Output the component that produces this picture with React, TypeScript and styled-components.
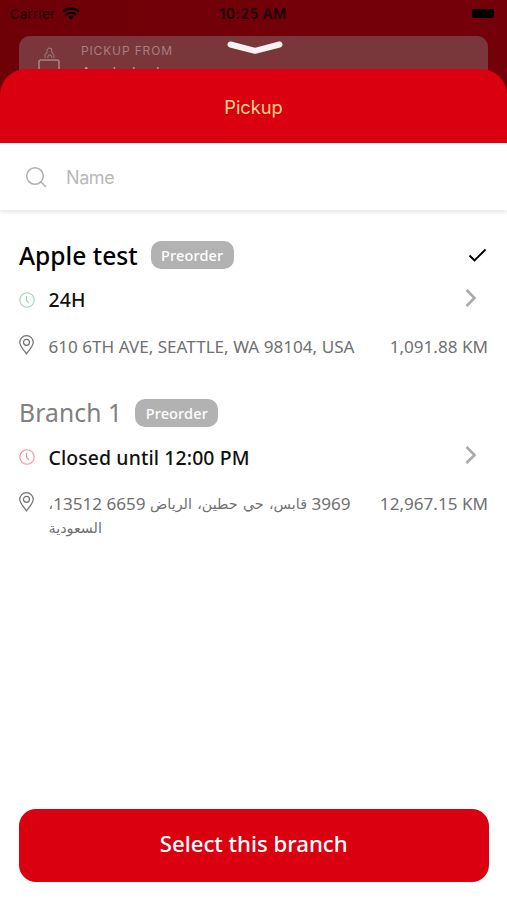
import React from "react";
import styled, { createGlobalStyle } from "styled-components";

const GlobalStyle = createGlobalStyle`
  * { box-sizing: border-box; }
  body { margin: 0; background: #fff; }
`;

const ui = `Inter, "Liberation Sans", sans-serif`;
const brand = `"Noto Sans", "DejaVu Sans", sans-serif`;

const Screen = styled.div`
  width: 507px;
  height: 900px;
  display: flex;
  flex-direction: column;
  background: #fff;
  overflow: hidden;
`;

const Behind = styled.div`
  height: 95px;
  flex: none;
  background: linear-gradient(100deg, #6e0008, #740009 60%);
  padding: 0 19px;
`;

const StatusBar = styled.div`
  height: 35.5px;
  margin: 0 -9px;
  padding: 0 1px 8px 0;
  display: grid;
  grid-template-columns: 1fr auto 1fr;
  align-items: center;
  font-family: ${ui};
  font-size: 13px;
  color: #180002;
`;

const Carrier = styled.div`
  display: flex;
  align-items: center;
  gap: 7px;
  letter-spacing: 0.4px;
`;

const Time = styled.div`
  font-size: 14px;
  font-weight: 600;
  letter-spacing: 0.4px;
`;

const Battery = styled.div`
  justify-self: end;
  width: 22px;
  height: 9px;
  margin-right: 2px;
  border-radius: 2px;
  background: #000;
`;

const PickupCard = styled.div`
  position: relative;
  height: 59px;
  border-radius: 11px;
  background: #79363b;
  padding: 7px 18px 0;
  display: flex;
  gap: 20px;
  font-family: ${ui};
`;

const CardLabel = styled.div`
  font-size: 12px;
  line-height: 16px;
  letter-spacing: 0.85px;
  color: #a87d80;
`;

const CardValue = styled.div`
  font-size: 15px;
  line-height: 20px;
  letter-spacing: 0.9px;
  margin-top: 4px;
  color: #b99a9c;
`;

const Handle = styled.svg`
  position: absolute;
  left: 207px;
  top: 4px;
`;

const Sheet = styled.main`
  position: relative;
  flex: 1;
  margin-top: -26.5px;
  display: flex;
  flex-direction: column;
`;

const Title = styled.header`
  height: 74.5px;
  padding-top: 2px;
  display: flex;
  align-items: center;
  justify-content: center;
  border-radius: 26px 26px 0 0;
  background: #da0010;
  color: #fbd38a;
  font-family: ${ui};
  font-size: 18.3px;
`;

const Search = styled.div`
  height: 67px;
  display: flex;
  align-items: center;
  gap: 18px;
  padding: 1px 25px 0;
  font-family: ${ui};
  font-size: 18px;
  letter-spacing: -0.4px;
  color: #b9b9b9;
  box-shadow: 0 2px 5px rgba(0, 0, 0, 0.11);
`;

const List = styled.div`
  flex: 1;
  padding: 28px 19px 0;
  font-family: ${brand};
`;

const Branch = styled.section`
  height: 157.5px;
`;

const NameRow = styled.div`
  height: 35px;
  display: flex;
  align-items: center;
`;

const Name = styled.h2<{ $active: boolean }>`
  margin: 0;
  font-size: 24.6px;
  line-height: 34px;
  font-weight: ${(p) => (p.$active ? 500 : 400)};
  letter-spacing: ${(p) => (p.$active ? "0" : "0.15px")};
  color: ${(p) => (p.$active ? "#000" : "#808080")};
`;

const Badge = styled.span`
  margin-left: 13px;
  width: 83px;
  height: 28px;
  margin-bottom: 1px;
  display: flex;
  align-items: center;
  justify-content: center;
  border-radius: 10px;
  background: #b2b2b2;
  color: #fff;
  font-size: 14.5px;
  letter-spacing: 0.15px;
  font-weight: 500;
`;

const Check = styled.svg`
  margin-left: auto;
`;

const HoursRow = styled.div`
  height: 30px;
  margin-top: 11.5px;
  display: flex;
  align-items: center;
  font-size: 19.4px;
  font-weight: 500;
  letter-spacing: 0.12px;
  color: #111;
`;

const IconCell = styled.span`
  width: 29.5px;
  flex: none;
  display: flex;
`;

const Chevron = styled.svg`
  margin: -4px 11px 0 auto;
`;

const AddressRow = styled.div`
  margin-top: 20px;
  display: flex;
  align-items: flex-start;
  font-size: 17.1px;
  line-height: 24px;
  color: #707070;
`;

const Address = styled.div<{ $rtl?: boolean }>`
  direction: ${(p) => (p.$rtl ? "rtl" : "ltr")};
  text-align: left;
  white-space: nowrap;
`;

const AddressLine = styled.div`
  height: 24px;
`;

const Arabic = styled.span`
  position: relative;
  top: -1px;
  font-size: 14.3px;
  word-spacing: 1.6px;
`;

const Distance = styled.div`
  margin-left: auto;
  white-space: nowrap;
`;

const Footer = styled.footer`
  padding: 0 18.5px 18.5px 19px;
`;

const SelectButton = styled.button`
  display: block;
  width: 100%;
  height: 73px;
  border: 0;
  padding: 0 0 3px;
  border-radius: 17px;
  background: #da0010;
  color: #fff;
  font-family: ${brand};
  font-size: 22.2px;
  font-weight: 500;
`;

const WifiIcon = () => (
  <svg width="18" height="13" viewBox="0 0 18 13" fill="none" stroke="#000" strokeWidth="2.4">
    <path d="M1 4.6C5.6.3 12.4.3 17 4.6" />
    <path d="M4 7.8c2.900-2.600 7.100-2.600 10 0" />
    <path d="M9 12.6 6.2 9.900c1.600-1.400 4-1.400 5.600 0Z" fill="#000" stroke="none" />
  </svg>
);

const BagIcon = () => (
  <svg width="24" height="50" viewBox="0 0 24 50" fill="none" stroke="#a58487" strokeWidth="1.6">
    <path d="M2 50V19q0-2 2-2h16q2 0 2 2v31" />
    <path d="M8 15v-4l2-1V7l1.500-2 3 .5.500 4.500 2 1.500V15M10.500 15l1-3h2.500l1 3" strokeWidth=".9" />
  </svg>
);

const SearchIcon = () => (
  <svg width="23" height="23" viewBox="0 0 23 23" fill="none" stroke="#b0b0b0" strokeWidth="1.5">
    <circle cx="10" cy="10" r="8.3" />
    <path d="m16 16 4.500 4.500" strokeLinecap="round" />
  </svg>
);

const ClockIcon = ({ color }: { color: string }) => (
  <svg width="16" height="16" viewBox="0 0 16 16" fill="none" stroke={color} strokeWidth="1.1">
    <circle cx="8" cy="8" r="7.2" />
    <path d="M7.500 4v4.500L10 11" />
  </svg>
);

const PinIcon = () => (
  <svg width="16" height="20" viewBox="0 0 16 20" fill="none" stroke="#707070" strokeWidth="1.2">
    <path d="M7.500 19C5.500 15.800.8 11 .8 7.400a6.700 6.700 0 0 1 13.400 0C14.200 11 9.500 15.800 7.500 19Z" strokeLinejoin="round" />
    <circle cx="7.500" cy="7.300" r="3" />
  </svg>
);

type AddressPart = { text: string; arabic?: boolean };

type BranchData = {
  name: string;
  active: boolean;
  hours: string;
  clock: string;
  address: AddressPart[][];
  rtl?: boolean;
  distance: string;
};

const branches: BranchData[] = [
  {
    name: "Apple test",
    active: true,
    hours: "24H",
    clock: "#a3d3b2",
    address: [[{ text: "610 6TH AVE, SEATTLE, WA 98104, USA" }]],
    distance: "1,091.88 KM",
  },
  {
    name: "Branch 1",
    active: false,
    hours: "Closed until 12:00 PM",
    clock: "#f58e9c",
    address: [
      [
        { text: "3969 " },
        { text: "قابس، حي حطين، الرياض", arabic: true },
        { text: " 6659 13512" },
        { text: "،", arabic: true },
      ],
      [{ text: "السعودية", arabic: true }],
    ],
    rtl: true,
    distance: "12,967.15 KM",
  },
];

export default function App() {
  return (
    <>
      <GlobalStyle />
      <Screen>
        <Behind>
          <StatusBar>
            <Carrier>Carrier <WifiIcon /></Carrier>
            <Time>10:25 AM</Time>
            <Battery />
          </StatusBar>
          <PickupCard>
            <BagIcon />
            <div>
              <CardLabel>PICKUP FROM</CardLabel>
              <CardValue>Apple test</CardValue>
            </div>
            <Handle width="58" height="16" viewBox="0 0 58 16" fill="none" stroke="#f7f3f3" strokeWidth="6" strokeLinecap="round" strokeLinejoin="round">
              <path d="M4.500 4.500 29 10.800 53.500 4.500" />
            </Handle>
          </PickupCard>
        </Behind>
        <Sheet>
          <Title>Pickup</Title>
          <Search><SearchIcon />Name</Search>
          <List>
            {branches.map((b) => (
              <Branch key={b.name}>
                <NameRow>
                  <Name $active={b.active}>{b.name}</Name>
                  <Badge>Preorder</Badge>
                  {b.active && (
                    <Check width="20" height="16" viewBox="0 0 20 16" fill="none" stroke="#000" strokeWidth="1.900">
                      <path d="m1.500 7.500 5 5L17.500 1.500" />
                    </Check>
                  )}
                </NameRow>
                <HoursRow>
                  <IconCell><ClockIcon color={b.clock} /></IconCell>
                  {b.hours}
                  <Chevron width="13" height="20" viewBox="0 0 13 20" fill="none" stroke="#aaa" strokeWidth="2.600">
                    <path d="m2.500 2 8 8-8 8" />
                  </Chevron>
                </HoursRow>
                <AddressRow>
                  <IconCell><PinIcon /></IconCell>
                  <Address $rtl={b.rtl}>
                    {b.address.map((line, i) => (
                      <AddressLine key={i}>
                        {line.map((part, j) =>
                          part.arabic ? <Arabic key={j}>{part.text}</Arabic> : part.text
                        )}
                      </AddressLine>
                    ))}
                  </Address>
                  <Distance>{b.distance}</Distance>
                </AddressRow>
              </Branch>
            ))}
          </List>
          <Footer><SelectButton>Select this branch</SelectButton></Footer>
        </Sheet>
      </Screen>
    </>
  );
}
